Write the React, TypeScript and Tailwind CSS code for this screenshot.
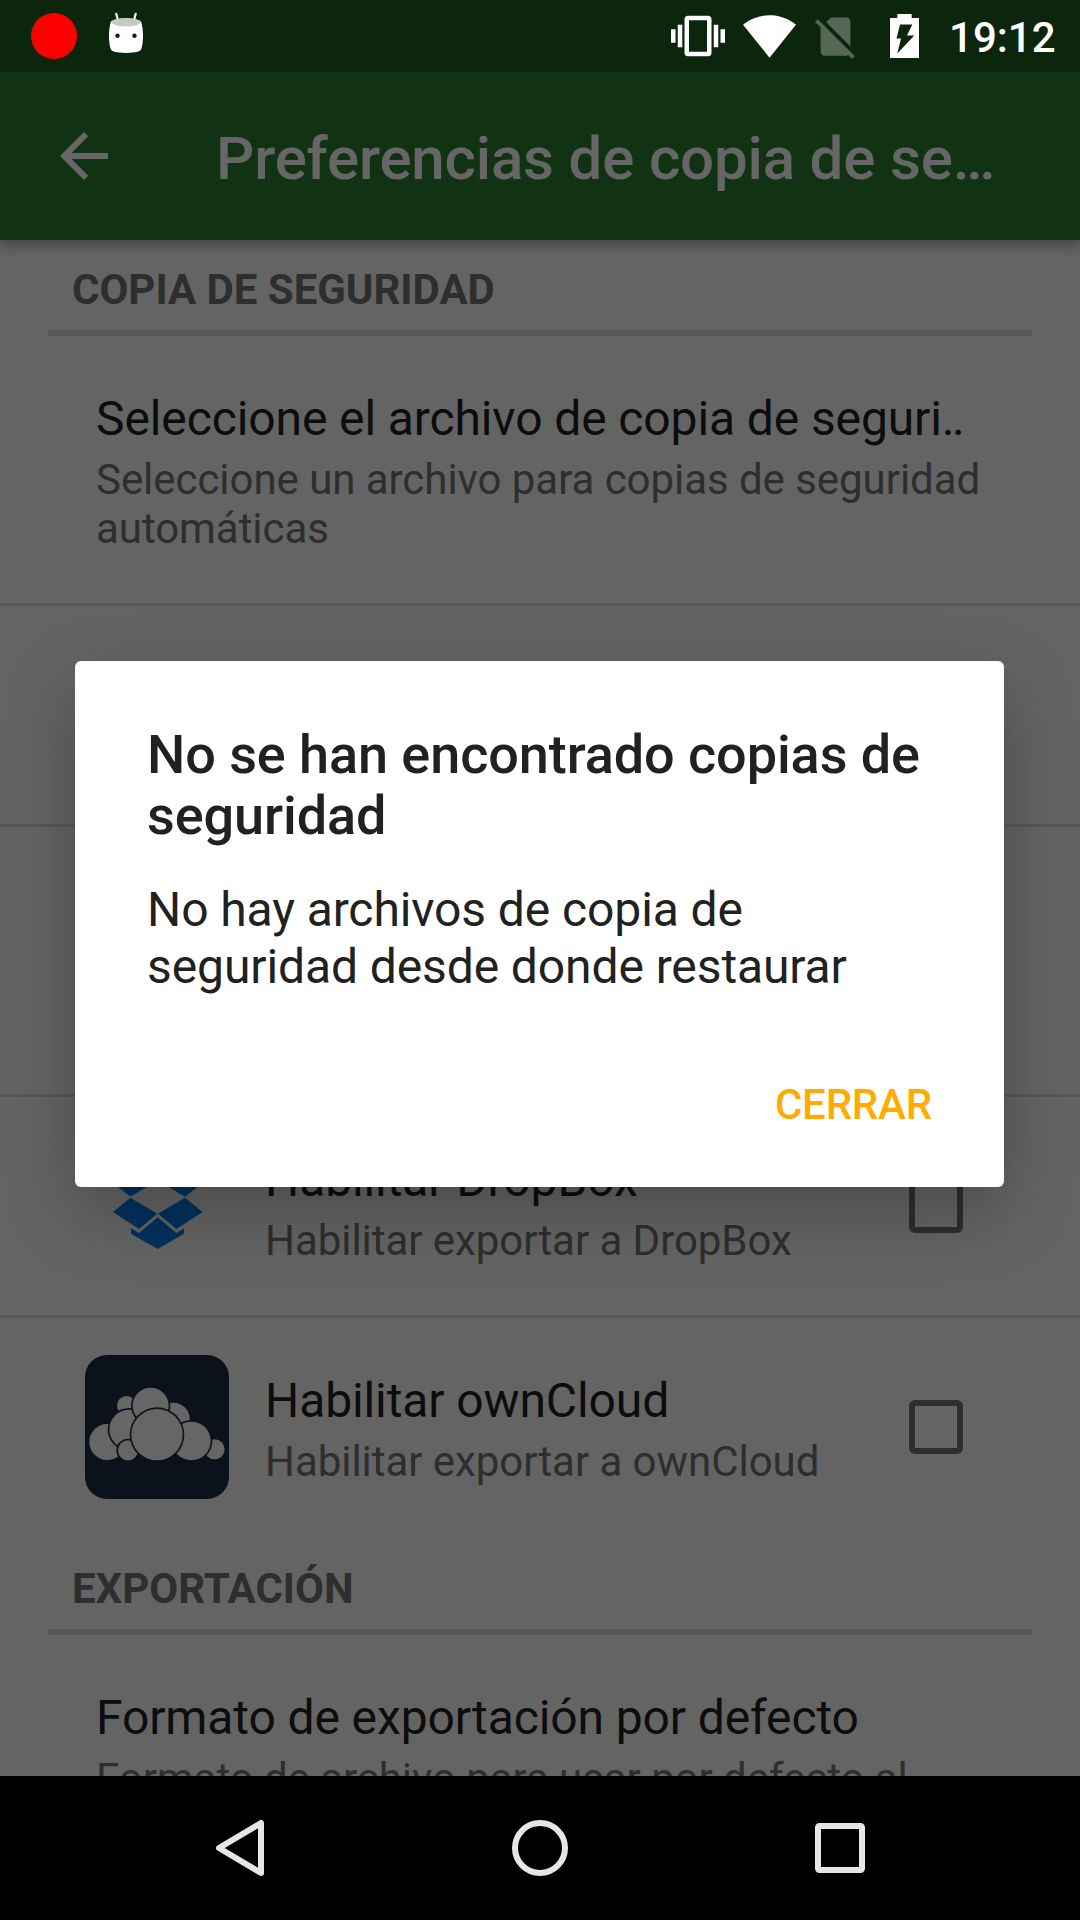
import type { ReactNode } from "react";

function StatusBar() {
  return (
    <div className="relative z-20 flex h-[72px] items-center justify-between bg-[#0b260d] pr-[24.4px] pl-[31px]">
      <div className="flex items-start">
        <span className="size-[46px] rounded-full bg-[#ff0000]" />
        <svg className="-mt-px ml-8 h-[42px] w-[34px]" viewBox="0 0 34 42">
          <path d="M7.2 1.8 9.400 9.500M26.700 1.800 24.600 9.500" stroke="#fff" strokeWidth="2.200" strokeLinecap="round" />
          <path
            fill="#fff"
            d="M1.700 10.500C.4 15 0 19 0 24c0 5 .5 9.500 1.700 13 .4 1.300 1.300 2 3 2.600 3.500 1.100 7.500 1.400 12.300 1.400s8.800-.3 12.300-1.400c1.700-.6 2.600-1.300 3-2.600C33.500 33.500 34 29 34 24c0-5-.4-9-1.700-13.500z"
          />
          <ellipse cx="17" cy="10.500" rx="15.300" ry="4.200" fill="#fff" />
          <ellipse cx="17" cy="10.300" rx="14.300" ry="4" fill="#c2c9c2" />
          <circle cx="8.500" cy="23.700" r="2.200" fill="#0b260d" />
          <circle cx="25.500" cy="23.700" r="2.200" fill="#0b260d" />
        </svg>
      </div>
      <div className="flex items-center text-white">
        <svg className="size-[54px]" viewBox="0 0 24 24" fill="currentColor">
          <path d="M0 15h2V9H0v6zm3 2h2V7H3v10zm19-8v6h2V9h-2zm-3 8h2V7h-2v10zM16.500 3h-9C6.670 3 6 3.670 6 4.500v15c0 .83.670 1.500 1.500 1.500h9c.83 0 1.500-.67 1.500-1.500v-15c0-.83-.67-1.500-1.500-1.500zM16 19H8V5h8v14z" />
        </svg>
        <svg className="ml-[17px] h-[51px] w-[55px]" viewBox="0 0 26 24" fill="currentColor">
          <path d="M13 22 25.500 6.400C25 6 20.200 2 13 2S1 6 .5 6.400L13 22z" />
        </svg>
        <svg className="ml-[13px] size-[51px] opacity-30" viewBox="0 0 24 24" fill="currentColor">
          <path d="M18.990 5c0-1.100-.89-2-1.990-2h-7L7.660 5.340 19 16.680 18.990 5zM3.650 3.880 2.380 5.150 5 7.770V19c0 1.100.9 2 2 2h10.010c.35 0 .67-.1.960-.26l1.880 1.880 1.270-1.270L3.650 3.880z" />
        </svg>
        <svg className="ml-[29px] h-11 w-[29px]" viewBox="0 0 29 44" fill="currentColor">
          <path
            fillRule="evenodd"
            d="M7.300 0h14.400v4H29v40H0V4h7.300zM10 10.500 6.500 24.600H11L7.300 39.500 24.300 21.400H17L22.300 10.500z"
          />
        </svg>
        <span className="mt-1 ml-[30px] text-[42px] leading-[48px] font-medium">19:12</span>
      </div>
    </div>
  );
}

function AppBar() {
  return (
    <div className="relative z-10 flex h-[168px] items-center bg-[#2e7d32] pl-12 text-white shadow-[0_4px_14px_rgba(0,0,0,0.4)]">
      <svg className="size-[72px]" viewBox="0 0 24 24" fill="currentColor">
        <path d="M20 11H7.830l5.590-5.590L12 4l-8 8 8 8 1.410-1.410L7.830 13H20v-2z" />
      </svg>
      <h1 className="mt-1.5 ml-24 text-[60px] leading-[70px] font-medium tracking-[-0.16px]">
        Preferencias de copia de se…
      </h1>
    </div>
  );
}

function SectionHeader({ children }: { children: ReactNode }) {
  return (
    <div className="mx-12 h-24 border-b-[6px] border-[#dcdcdc] pt-[25px] pl-6">
      <h2 className="text-[42px] leading-[49px] font-bold tracking-[-0.04px] text-[#737373]">{children}</h2>
    </div>
  );
}

function ItemText({ title, summary }: { title: string; summary: string }) {
  return (
    <div className="flex-1 pt-[55px]">
      <p className="text-[48px] leading-[56px] tracking-[-0.11px] whitespace-nowrap text-[#212121]">{title}</p>
      <p className="mt-2 text-[42px] leading-[49px] tracking-[-0.05px] text-[#737373]">{summary}</p>
    </div>
  );
}

function PlainItem({ title, summary }: { title: string; summary: string }) {
  return (
    <div className="flex h-[267px] px-24">
      <ItemText title={title} summary={summary} />
    </div>
  );
}

function ServiceItem({ icon, title, summary }: { icon: ReactNode; title: string; summary: string }) {
  return (
    <div className="flex h-[218px] pr-[117px] pl-[85px]">
      <div className="mt-[37px] mr-9 size-36 shrink-0">{icon}</div>
      <ItemText title={title} summary={summary} />
      <div className="mt-[82px] size-[54px] shrink-0 rounded-[6px] border-[6px] border-[#737373]" />
    </div>
  );
}

function DropboxIcon() {
  return (
    <svg viewBox="75 42 432 432" className="size-36" fill="#007ee5">
      <path d="M237 136 292 182 211 230 159 189zM349 136 428 189 375 230 294 182zM159 276 211 233 292 281 237 327zM428 276 375 233 294 281 349 327zM213 325 237 339 293 292 349 339 372 325 372 341 293 387 213 341z" />
    </svg>
  );
}

const puffs = [
  [464, 988, 30],
  [200, 857, 29],
  [340, 897, 49],
  [142, 966, 54],
  [207, 928, 59],
  [272, 857, 54],
  [394, 963, 58],
  [204, 991, 30],
  [291, 944, 77],
];

function OwnCloudIcon() {
  return (
    <svg viewBox="75 705 432 432" className="size-36">
      <rect x="75" y="705" width="432" height="432" rx="66" fill="#1d2d44" />
      {puffs.map(([cx, cy, r]) => (
        <g key={`${cx}-${cy}`}>
          <circle cx={cx} cy={cy} r={r + 5} fill="#1d2d44" />
          <circle cx={cx} cy={cy} r={r} fill="#fff" />
        </g>
      ))}
    </svg>
  );
}

function Divider() {
  return <div className="h-[3px] shrink-0 bg-[#dcdcdc]" />;
}

function AlertDialog() {
  return (
    <div
      role="dialog"
      className="absolute top-[661px] left-[75px] z-40 flex h-[526px] w-[929px] flex-col rounded-[6px] bg-white px-[72px] pt-[63px] text-[#212121] shadow-[0_24px_72px_rgba(0,0,0,0.26)]"
    >
      <h2 className="text-[54px] leading-[61px] font-medium tracking-[-0.08px]">
        No se han encontrado copias de seguridad
      </h2>
      <p className="mt-[35px] text-[48px] leading-[57px] tracking-[-0.1px]">
        No hay archivos de copia de
        <br />
        seguridad desde donde restaurar
      </p>
      <button className="mt-[85px] self-end text-[42px] leading-[49px] font-medium tracking-[-0.2px] text-[#ffab00]">
        CERRAR
      </button>
    </div>
  );
}

function NavigationBar() {
  return (
    <div className="relative z-20 flex h-36 items-center justify-around bg-black px-[90px]">
      <svg className="size-[60px]" viewBox="0 0 60 60" fill="none" stroke="#e6e6e6" strokeWidth="6" strokeLinejoin="round">
        <path d="M51 5v50L9 30z" />
      </svg>
      <svg className="size-[60px]" viewBox="0 0 60 60" fill="none" stroke="#e6e6e6" strokeWidth="6">
        <circle cx="30" cy="30" r="25" />
      </svg>
      <svg className="size-[60px]" viewBox="0 0 60 60" fill="none" stroke="#e6e6e6" strokeWidth="6" strokeLinejoin="round">
        <rect x="8" y="8" width="44" height="44" rx="1.500" />
      </svg>
    </div>
  );
}

export default function App() {
  return (
    <div className="relative flex h-[1920px] w-[1080px] flex-col overflow-hidden bg-[#fafafa] font-['Roboto',sans-serif]">
      <StatusBar />
      <div className="relative flex min-h-0 flex-1 flex-col">
        <AppBar />
        <main className="min-h-0 flex-1 overflow-hidden">
          <SectionHeader>COPIA DE SEGURIDAD</SectionHeader>
          <PlainItem
            title="Seleccione el archivo de copia de seguri‥"
            summary="Seleccione un archivo para copias de seguridad automáticas"
          />
          <Divider />
          <div className="h-[218px]" />
          <Divider />
          <div className="h-[267px]" />
          <Divider />
          <ServiceItem icon={<DropboxIcon />} title="Habilitar DropBox" summary="Habilitar exportar a DropBox" />
          <Divider />
          <ServiceItem icon={<OwnCloudIcon />} title="Habilitar ownCloud" summary="Habilitar exportar a ownCloud" />
          <div className="h-[3px]" />
          <SectionHeader>EXPORTACIÓN</SectionHeader>
          <PlainItem title="Formato de exportación por defecto" summary="Formato de archivo para usar por defecto al" />
        </main>
        <div className="absolute inset-0 z-30 bg-black/60" />
      </div>
      <AlertDialog />
      <NavigationBar />
    </div>
  );
}
